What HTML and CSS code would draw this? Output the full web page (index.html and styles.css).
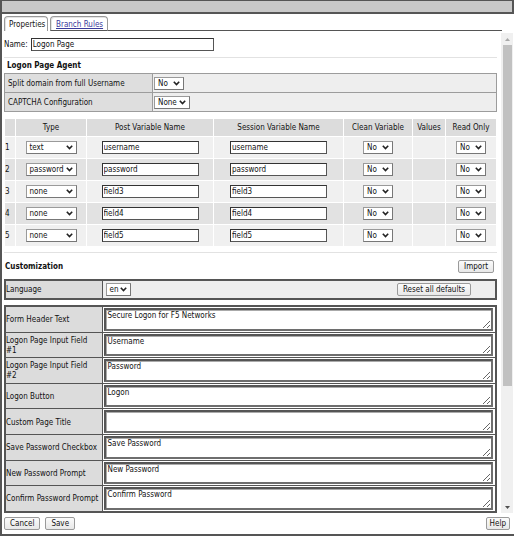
FILE: index.html
```html
<!DOCTYPE html>
<html>
<head>
<meta charset="utf-8">
<link rel="stylesheet" href="styles.css">
</head>
<body>
<div class="window">
  <div class="titlebar"></div>
  <div class="tabs">
    <span class="tab tab-active">Properties</span>
    <span class="tab tab-idle"><a href="#">Branch Rules</a></span>
    <span class="tabfill"></span>
  </div>
  <div class="main">
    <div class="content">
      <div class="name-row">
        <label>Name:</label>
        <input class="inp inp-name" type="text" value="Logon Page">
      </div>
      <div class="hr hr-1"></div>
      <div class="section-title">Logon Page Agent</div>
      <table class="agent">
        <tr>
          <td class="lbl agent-lbl">Split domain from full Username</td>
          <td class="val"><span class="sel sel-no"><span>No</span><svg width="7" height="5" viewBox="0 0 7 5"><path d="M0.8 0.8 L3.5 3.6 L6.2 0.8" fill="none" stroke="#222" stroke-width="1.6"/></svg></span></td>
        </tr>
        <tr>
          <td class="lbl agent-lbl">CAPTCHA Configuration</td>
          <td class="val"><span class="sel sel-none"><span>None</span><svg width="7" height="5" viewBox="0 0 7 5"><path d="M0.8 0.8 L3.5 3.6 L6.2 0.8" fill="none" stroke="#222" stroke-width="1.6"/></svg></span></td>
        </tr>
      </table>

      <table class="vars">
        <colgroup>
          <col class="w-num"><col class="w-type"><col class="w-post"><col class="w-sess"><col class="w-clean"><col class="w-values"><col class="w-ro">
        </colgroup>
        <tr class="head">
          <td></td><td>Type</td><td>Post Variable Name</td><td>Session Variable Name</td><td>Clean Variable</td><td>Values</td><td>Read Only</td>
        </tr>
        <tr class="odd">
          <td class="num">1</td>
          <td><span class="sel sel-type"><span>text</span><svg width="7" height="5" viewBox="0 0 7 5"><path d="M0.8 0.8 L3.5 3.6 L6.2 0.8" fill="none" stroke="#222" stroke-width="1.6"/></svg></span></td>
          <td><input class="inp inp-var" type="text" value="username"></td>
          <td><input class="inp inp-var" type="text" value="username"></td>
          <td><span class="sel sel-no"><span>No</span><svg width="7" height="5" viewBox="0 0 7 5"><path d="M0.8 0.8 L3.5 3.6 L6.2 0.8" fill="none" stroke="#222" stroke-width="1.6"/></svg></span></td>
          <td></td>
          <td><span class="sel sel-no"><span>No</span><svg width="7" height="5" viewBox="0 0 7 5"><path d="M0.8 0.8 L3.5 3.6 L6.2 0.8" fill="none" stroke="#222" stroke-width="1.6"/></svg></span></td>
        </tr>
        <tr class="even">
          <td class="num">2</td>
          <td><span class="sel sel-type"><span>password</span><svg width="7" height="5" viewBox="0 0 7 5"><path d="M0.8 0.8 L3.5 3.6 L6.2 0.8" fill="none" stroke="#222" stroke-width="1.6"/></svg></span></td>
          <td><input class="inp inp-var" type="text" value="password"></td>
          <td><input class="inp inp-var" type="text" value="password"></td>
          <td><span class="sel sel-no"><span>No</span><svg width="7" height="5" viewBox="0 0 7 5"><path d="M0.8 0.8 L3.5 3.6 L6.2 0.8" fill="none" stroke="#222" stroke-width="1.6"/></svg></span></td>
          <td></td>
          <td><span class="sel sel-no"><span>No</span><svg width="7" height="5" viewBox="0 0 7 5"><path d="M0.8 0.8 L3.5 3.6 L6.2 0.8" fill="none" stroke="#222" stroke-width="1.6"/></svg></span></td>
        </tr>
        <tr class="odd">
          <td class="num">3</td>
          <td><span class="sel sel-type"><span>none</span><svg width="7" height="5" viewBox="0 0 7 5"><path d="M0.8 0.8 L3.5 3.6 L6.2 0.8" fill="none" stroke="#222" stroke-width="1.6"/></svg></span></td>
          <td><input class="inp inp-var" type="text" value="field3"></td>
          <td><input class="inp inp-var" type="text" value="field3"></td>
          <td><span class="sel sel-no"><span>No</span><svg width="7" height="5" viewBox="0 0 7 5"><path d="M0.8 0.8 L3.5 3.6 L6.2 0.8" fill="none" stroke="#222" stroke-width="1.6"/></svg></span></td>
          <td></td>
          <td><span class="sel sel-no"><span>No</span><svg width="7" height="5" viewBox="0 0 7 5"><path d="M0.8 0.8 L3.5 3.6 L6.2 0.8" fill="none" stroke="#222" stroke-width="1.6"/></svg></span></td>
        </tr>
        <tr class="even">
          <td class="num">4</td>
          <td><span class="sel sel-type"><span>none</span><svg width="7" height="5" viewBox="0 0 7 5"><path d="M0.8 0.8 L3.5 3.6 L6.2 0.8" fill="none" stroke="#222" stroke-width="1.6"/></svg></span></td>
          <td><input class="inp inp-var" type="text" value="field4"></td>
          <td><input class="inp inp-var" type="text" value="field4"></td>
          <td><span class="sel sel-no"><span>No</span><svg width="7" height="5" viewBox="0 0 7 5"><path d="M0.8 0.8 L3.5 3.6 L6.2 0.8" fill="none" stroke="#222" stroke-width="1.6"/></svg></span></td>
          <td></td>
          <td><span class="sel sel-no"><span>No</span><svg width="7" height="5" viewBox="0 0 7 5"><path d="M0.8 0.8 L3.5 3.6 L6.2 0.8" fill="none" stroke="#222" stroke-width="1.6"/></svg></span></td>
        </tr>
        <tr class="odd">
          <td class="num">5</td>
          <td><span class="sel sel-type"><span>none</span><svg width="7" height="5" viewBox="0 0 7 5"><path d="M0.8 0.8 L3.5 3.6 L6.2 0.8" fill="none" stroke="#222" stroke-width="1.6"/></svg></span></td>
          <td><input class="inp inp-var" type="text" value="field5"></td>
          <td><input class="inp inp-var" type="text" value="field5"></td>
          <td><span class="sel sel-no"><span>No</span><svg width="7" height="5" viewBox="0 0 7 5"><path d="M0.8 0.8 L3.5 3.6 L6.2 0.8" fill="none" stroke="#222" stroke-width="1.6"/></svg></span></td>
          <td></td>
          <td><span class="sel sel-no"><span>No</span><svg width="7" height="5" viewBox="0 0 7 5"><path d="M0.8 0.8 L3.5 3.6 L6.2 0.8" fill="none" stroke="#222" stroke-width="1.6"/></svg></span></td>
        </tr>
      </table>

      <div class="hr hr-2"></div>
      <div class="cust-row">
        <span class="section-title-inline">Customization</span>
        <button class="btn">Import</button>
      </div>

      <table class="lang">
        <tr>
          <td class="flbl">Language</td>
          <td class="lang-val">
            <div class="lang-inner">
              <span class="sel sel-en"><span>en</span><svg width="7" height="5" viewBox="0 0 7 5"><path d="M0.8 0.8 L3.5 3.6 L6.2 0.8" fill="none" stroke="#222" stroke-width="1.6"/></svg></span>
              <button class="btn">Reset all defaults</button>
            </div>
          </td>
        </tr>
      </table>

      <table class="fields">
        <tr><td class="flbl">Form Header Text</td><td class="fval"><textarea>Secure Logon for F5 Networks</textarea></td></tr>
        <tr><td class="flbl">Logon Page Input Field<br>#1</td><td class="fval"><textarea>Username</textarea></td></tr>
        <tr><td class="flbl">Logon Page Input Field<br>#2</td><td class="fval"><textarea>Password</textarea></td></tr>
        <tr><td class="flbl">Logon Button</td><td class="fval"><textarea>Logon</textarea></td></tr>
        <tr><td class="flbl">Custom Page Title</td><td class="fval"><textarea></textarea></td></tr>
        <tr><td class="flbl">Save Password Checkbox</td><td class="fval"><textarea>Save Password</textarea></td></tr>
        <tr><td class="flbl">New Password Prompt</td><td class="fval"><textarea>New Password</textarea></td></tr>
        <tr><td class="flbl">Confirm Password Prompt</td><td class="fval"><textarea>Confirm Password</textarea></td></tr>
      </table>
    </div>
    <div class="scrollbar">
      <div class="sb-btn"><svg width="5" height="3" viewBox="0 0 5 3"><path d="M0 3 L2.5 0 L5 3 Z" fill="#a8a8a8"/></svg></div>
      <div class="sb-track"><div class="sb-thumb"></div></div>
      <div class="sb-btn"><svg width="5" height="3" viewBox="0 0 5 3"><path d="M0 0 L2.5 3 L5 0 Z" fill="#505050"/></svg></div>
    </div>
  </div>
  <div class="footer">
    <div class="footer-left">
      <button class="btn">Cancel</button>
      <button class="btn">Save</button>
    </div>
    <button class="btn btn-help">Help</button>
  </div>
</div>
</body>
</html>
```

FILE: styles.css
```css
* { box-sizing: border-box; }
html, body { margin: 0; padding: 0; background: #fff; }
body {
  font-family: "DejaVu Sans Condensed", "DejaVu Sans", sans-serif;
  font-size: 8px;
  color: #111;
}
input, textarea, button { font: inherit; color: #111; }

.window {
  width: 514px;
  height: 536px;
  border-left: 2px solid #555;
  border-bottom: 2px solid #555;
  display: flex;
  flex-direction: column;
  overflow: hidden;
}
.titlebar {
  height: 14px;
  flex: none;
  background: #c8c8c8;
  border-top: 1px solid #555;
  border-bottom: 2px solid #555;
  border-right: 2px solid #555;
}

/* tabs */
.tabs {
  height: 17px;
  flex: none;
  display: flex;
  align-items: flex-end;
  padding-left: 2px;
  padding-right: 12px;
}
.tab {
  height: 15px;
  line-height: 13px;
  padding: 1px 4px 0;
  border: 1px solid #999;
  border-radius: 4px 4px 0 0;
  box-shadow: inset 1px 1px 0 #e4e4e4;
  background: #fff;
  white-space: nowrap;
}
.tab-active { border-bottom: none; width: 44px; }
.tab-idle { margin-left: 2px; border-bottom: 1px solid #555; padding: 1px 4px 0 5px; }
.tab-idle a { color: #3a3a9c; text-decoration: underline; }
.tabfill { flex: 1; border-bottom: 1px solid #555; }

/* main area */
.main { flex: 1; display: flex; min-height: 0; }
.content {
  flex: 1;
  overflow: hidden;
  padding: 0 4px 0 2px;
}
.scrollbar {
  width: 12px;
  flex: none;
  margin: 2px 1px 1px 0;
  background: #f0f0f0;
  display: flex;
  flex-direction: column;
}
.sb-btn { height: 12px; display: flex; align-items: center; justify-content: center; flex: none; }
.sb-track { flex: 1; padding-left: 2px; }
.sb-thumb { width: 9px; height: 341px; background: #c1c1c1; }

.name-row {
  margin-top: 7px;
  height: 13px;
  display: flex;
  align-items: center;
  gap: 3px;
}
.inp {
  height: 13px;
  border: 1px solid #333;
  border-right-color: #555;
  border-bottom-color: #555;
  padding: 0 1px;
  background: #fff;
  outline: none;
}
.inp-name { width: 183px; }
.inp-var { width: 97px; display: block; margin: 0 auto; }

.hr { height: 1px; background: #e2e2e2; }
.hr-1 { margin-top: 6px; }
.hr-2 { margin-top: 5px; }

.section-title {
  height: 15px;
  line-height: 15px;
  font-weight: bold;
  padding-left: 3px;
}

/* selects */
.sel {
  display: inline-flex;
  align-items: center;
  justify-content: space-between;
  height: 13px;
  border: 1px solid #9a9a9a;
  border-right-color: #777;
  border-bottom-color: #777;
  background: #fff;
  padding: 0 3px 0 3px;
  vertical-align: middle;
}
.sel svg { flex: none; }
.sel-no { width: 30px; }
.sel-none { width: 36px; }
.sel-type { width: 51px; }
.sel-en { width: 25px; }

/* agent table */
.agent {
  width: 100%;
  border-collapse: collapse;
}
.agent td {
  border: 1px solid #9c9c9c;
  height: 19px;
  padding: 0;
  vertical-align: middle;
}
.agent .lbl { background: #dedede; width: 148px; padding-left: 3px; }
.agent .val { background: #eeeeee; padding-left: 1px; }

/* variables table */
.vars {
  width: 100%;
  margin-top: 6px;
  border-collapse: separate;
  border-spacing: 1px;
  table-layout: fixed;
}
.w-num { width: 10px; }
.w-type { width: 70px; }
.w-post { width: 126px; }
.w-sess { width: 129px; }
.w-clean { width: 68px; }
.w-values { width: 32px; }
.w-ro { width: 50px; }
.vars td {
  padding: 0;
  text-align: center;
  vertical-align: middle;
  height: 21px;
}
.vars .head td { background: #dcdcdc; height: 17px; }
.vars .odd td { background: #f0f0f0; }
.vars .even td { background: #e2e2e2; }
.vars td.num { text-align: left; }

/* customization */
.cust-row {
  margin-top: 7px;
  height: 13px;
  display: flex;
  align-items: center;
  justify-content: space-between;
  padding: 0 3px 0 1px;
}
.section-title-inline { font-weight: bold; }

.btn {
  height: 13px;
  padding: 0 5px;
  line-height: 11px;
  border: 1px solid #9a9a9a;
  border-radius: 2px;
  background: linear-gradient(#fbfbfb, #e8e8e8);
  white-space: nowrap;
  cursor: pointer;
}
.btn-help { padding: 0 3px; }

.lang {
  width: 100%;
  margin-top: 6px;
  border-collapse: collapse;
  border: 2px solid #555;
}
.lang td { border: 1px solid #555; height: 19px; padding: 0; vertical-align: middle; }
.flbl { background: #dcdcdc; width: 97px; padding: 0 1px 0 3px; line-height: 10px; }
.lang-val { background: #eeeeee; }
.lang-inner {
  display: flex;
  align-items: center;
  justify-content: space-between;
  padding: 0 24px 0 3px;
}

.fields {
  width: 100%;
  margin-top: 5px;
  border-collapse: collapse;
  border: 2px solid #555;
}
.fields td { border: 1px solid #555; padding: 0; vertical-align: middle; }
.fields td.flbl { padding-top: 2px; }
.fields td.fval { padding: 1px 2px 1px 1px; }
.fields textarea {
  display: block;
  width: 100%;
  height: 22.6px;
  margin: 0;
  padding: 1px 2px 0;
  border: 2px solid #6e6e6e;
  border-top-color: #555;
  border-left-color: #555;
  box-shadow: inset 1px 1px 0 #aaa;
  background: #fff;
  overflow: hidden;
  line-height: 10px;
  outline: none;
}

.footer {
  flex: none;
  height: 20px;
  display: flex;
  align-items: flex-start;
  justify-content: space-between;
  padding: 3px 4px 0 2px;
}
.footer-left { display: flex; gap: 5px; }
```
